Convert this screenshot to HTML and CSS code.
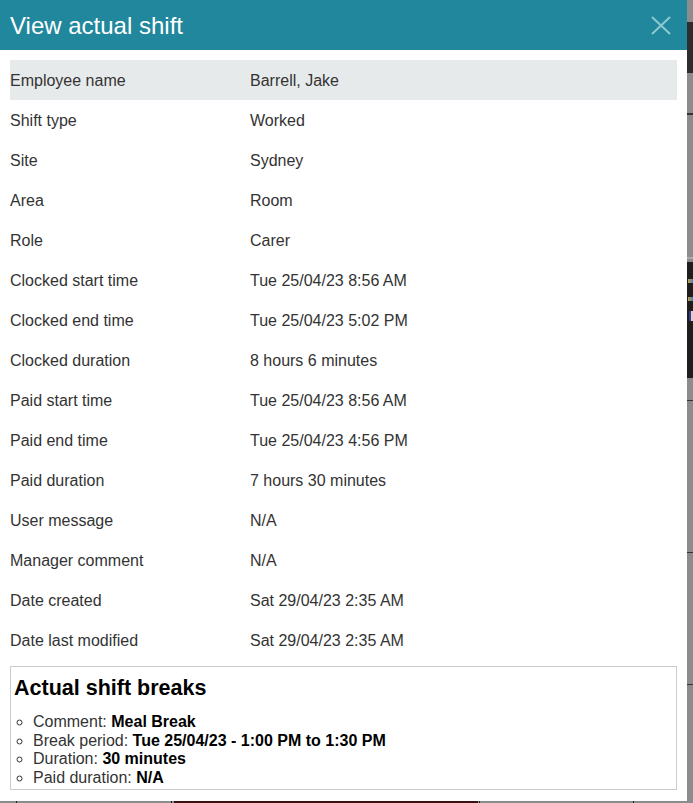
FILE: index.html
```html
<!DOCTYPE html>
<html>

<head lang="en">
  <meta charset="UTF-8">
  <title>View actual shift</title>
  <link rel="stylesheet" href="styles.css">
</head>

<body>
  <!-- page behind the overlay -->
  <div class="backdrop">
    <div class="bg-bar bar1"></div>
    <div class="bg-line line1"></div>
    <div class="bg-panel">
      <span class="tag tag1"></span>
      <span class="tag tag2"></span>
      <span class="tag tag3"></span>
    </div>
    <div class="bg-line line2"></div>
    <div class="bg-line line3"></div>
    <div class="bg-line line4"></div>
    <div class="bg-foot"></div>
    <div class="bg-tick tick1"></div>
    <div class="bg-tick tick2"></div>
    <div class="bg-tick tick3"></div>
    <div class="bg-tick tick4"></div>
  </div>

  <div class="modal">
    <div class="modal-header">
      <h2 class="modal-title">View actual shift</h2>
      <a href="javascript:;" class="close">
        <svg width="20" height="19" viewBox="0 0 20 19">
          <path d="M1 1 L19 18 M19 1 L1 18" stroke="currentColor" stroke-width="2" fill="none" />
        </svg>
      </a>
    </div>

    <div class="modal-body">
      <div class="details">
        <div class="row first"><span>Employee name</span><span>Barrell, Jake</span></div>
        <div class="row"><span>Shift type</span><span>Worked</span></div>
        <div class="row"><span>Site</span><span>Sydney</span></div>
        <div class="row"><span>Area</span><span>Room</span></div>
        <div class="row"><span>Role</span><span>Carer</span></div>
        <div class="row"><span>Clocked start time</span><span>Tue 25/04/23 8:56 AM</span></div>
        <div class="row"><span>Clocked end time</span><span>Tue 25/04/23 5:02 PM</span></div>
        <div class="row"><span>Clocked duration</span><span>8 hours 6 minutes</span></div>
        <div class="row"><span>Paid start time</span><span>Tue 25/04/23 8:56 AM</span></div>
        <div class="row"><span>Paid end time</span><span>Tue 25/04/23 4:56 PM</span></div>
        <div class="row"><span>Paid duration</span><span>7 hours 30 minutes</span></div>
        <div class="row"><span>User message</span><span>N/A</span></div>
        <div class="row"><span>Manager comment</span><span>N/A</span></div>
        <div class="row"><span>Date created</span><span>Sat 29/04/23 2:35 AM</span></div>
        <div class="row"><span>Date last modified</span><span>Sat 29/04/23 2:35 AM</span></div>
      </div>

      <div class="breaks">
        <h3>Actual shift breaks</h3>
        <ul>
          <li>Comment: <b>Meal Break</b></li>
          <li>Break period: <b>Tue 25/04/23 - 1:00 PM to 1:30 PM</b></li>
          <li>Duration: <b>30 minutes</b></li>
          <li>Paid duration: <b>N/A</b></li>
        </ul>
      </div>
    </div>
  </div>
</body>

</html>
```

FILE: styles.css
```css
* {
  margin: 0;
  padding: 0;
  box-sizing: border-box;
}

body {
  background: #8c8c8c;
  font-family: "Liberation Sans", Arial, sans-serif;
  color: #333;
  height: 803px;
  overflow: hidden;
  position: relative;
}

/* greyed-out page under the dialog */
.backdrop {
  position: absolute;
  left: 0;
  top: 0;
  width: 693px;
  height: 803px;
}

.bg-bar,
.bg-line,
.bg-panel,
.bg-foot,
.bg-tick {
  position: absolute;
}

.bar1 {
  left: 680px;
  top: 22px;
  width: 13px;
  height: 51px;
  background: #2d2d2d;
}

.bg-line {
  left: 680px;
  width: 13px;
  height: 1px;
  background: #333;
}

.line1 {
  top: 113px;
  height: 2px;
}

.line2 {
  top: 400px;
}

.line3 {
  top: 552px;
}

.line4 {
  top: 684px;
}

.bg-panel {
  left: 680px;
  top: 257px;
  width: 13px;
  height: 121px;
  background: #1e1e1e;
  border-top: 2px solid #aaa;
  box-shadow: inset 0 3px 0 #8c8c8c;
}

.tag {
  position: absolute;
  left: 8px;
  height: 4px;
  width: 5px;
}

.tag1 {
  top: 20px;
  background: linear-gradient(90deg, #c9a23a, #3a7fc9);
}

.tag2 {
  top: 38px;
  background: linear-gradient(90deg, #c9a23a, #3a7fc9);
}

.tag3 {
  top: 52px;
  height: 10px;
  width: 4px;
  left: 9px;
  background: #d8d0d0;
  border-left: 2px solid #3a3a8c;
}

.bg-foot {
  left: 174px;
  top: 801px;
  width: 304px;
  height: 2px;
  background: #3b1111;
}

.bg-tick {
  top: 801px;
  width: 1px;
  height: 2px;
  background: #222;
}

.tick1 {
  left: 16px;
}

.tick2 {
  left: 171px;
}

.tick3 {
  left: 479px;
}

.tick4 {
  left: 633px;
}

/* dialog */
.modal {
  position: relative;
  z-index: 2;
  width: 687px;
  height: 801px;
  background: #fff;
}

.modal-header {
  height: 50px;
  background: #20879c;
  display: flex;
  align-items: center;
  justify-content: space-between;
  padding: 0 16px 0 10px;
}

.modal-title {
  font-size: 24px;
  font-weight: normal;
  color: #fff;
  line-height: 1;
  margin-top: 1px;
}

.close {
  color: #8fc8d2;
  display: flex;
  margin-top: 1px;
}

.modal-body {
  padding: 10px 10px 0;
}

.details .row {
  display: grid;
  grid-template-columns: 240px 1fr;
  align-items: center;
  height: 40px;
  padding-top: 2px;
  font-size: 16px;
}

.details .row.first {
  background: #e7eaeb;
}

.breaks {
  margin-top: 6px;
  height: 124px;
  border: 1px solid #ccc;
  padding: 9px 3px 0;
  color: #000;
}

.breaks h3 {
  font-size: 21.5px;
  line-height: 24px;
  font-weight: bold;
}

.breaks ul {
  list-style: circle;
  padding-left: 19px;
  margin-top: 13px;
  font-size: 16px;
  line-height: 18.5px;
  color: #333;
}

.breaks li b {
  color: #000;
}
```
